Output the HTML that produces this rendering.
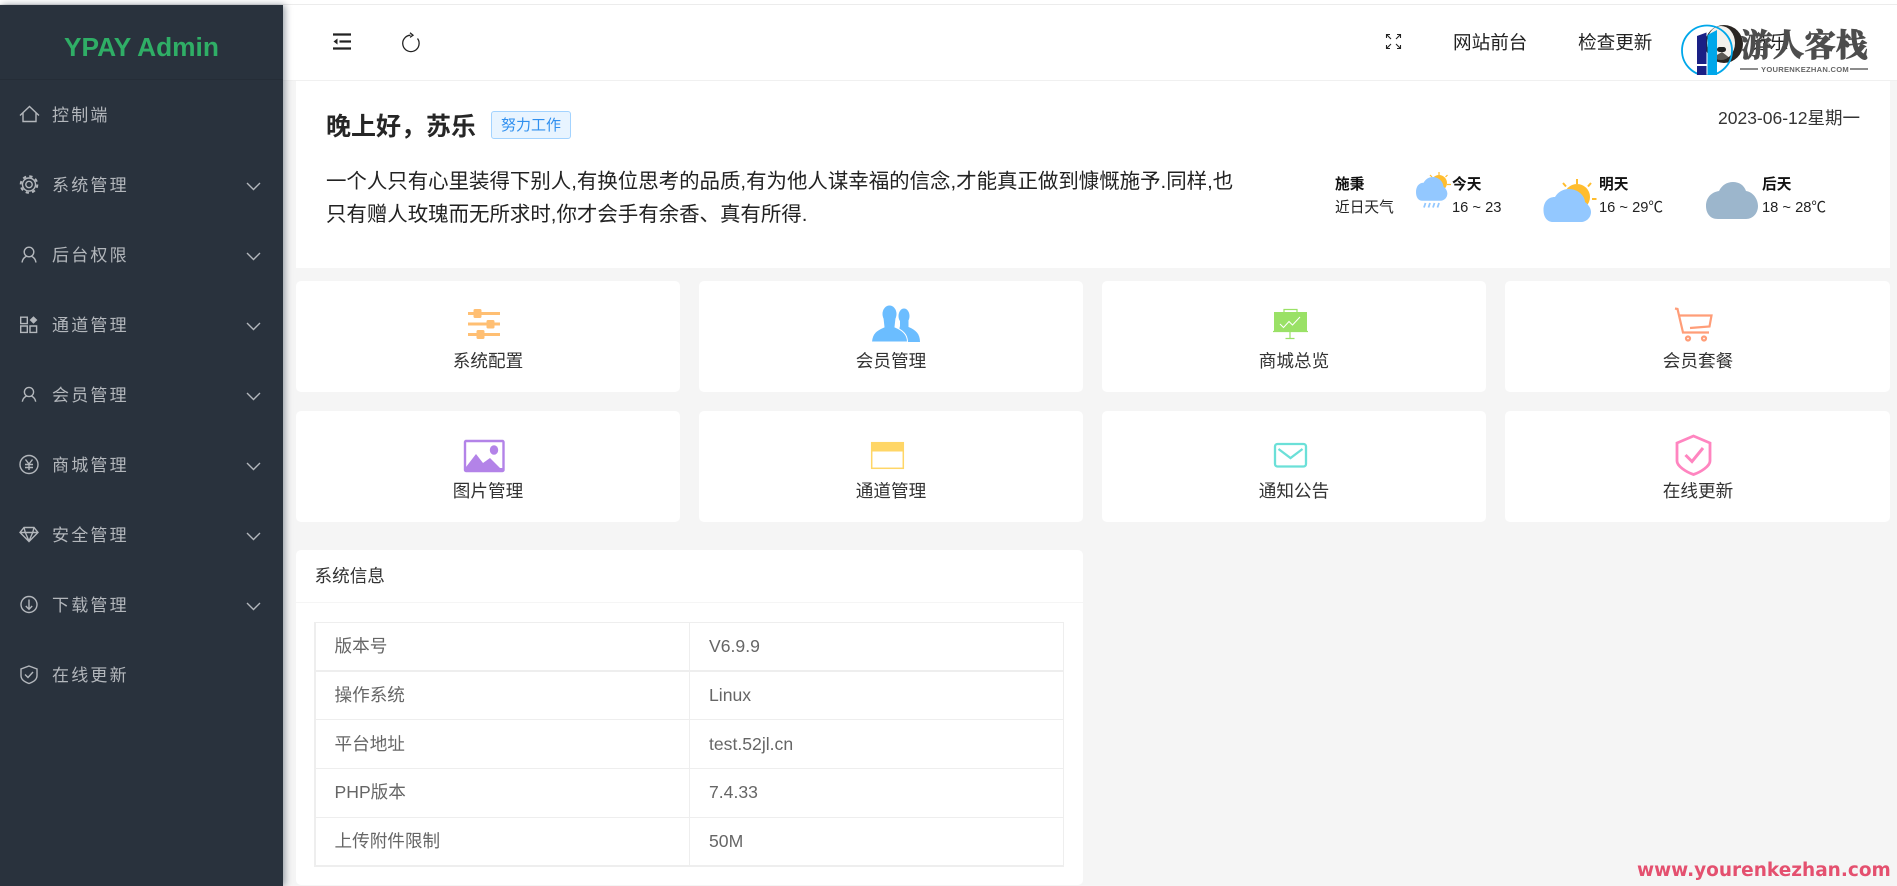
<!DOCTYPE html>
<html lang="zh-CN">
<head>
<meta charset="utf-8">
<title>YPAY Admin</title>
<style>
html,body{margin:0;padding:0;width:1897px;height:886px;overflow:hidden;background:#f5f5f5;font-family:"Liberation Sans","Noto Sans CJK SC",sans-serif;color:#333}
.abs{position:absolute}
.t{position:absolute;white-space:nowrap;line-height:24px}
.card{position:absolute;background:#fff;border-radius:5px}
#top{left:0;top:0;width:1897px;height:4px;background:#fff;border-bottom:1px solid #ececec}
#side{left:0;top:5px;width:283px;height:881px;background:#29323d;box-shadow:2px 0 7px rgba(0,21,41,.4);z-index:3}
#logoline{left:0;top:79px;width:283px;height:1px;background:#252d37;z-index:4}
#head{left:283px;top:5px;width:1614px;height:75px;background:#fff;border-bottom:1px solid #f0f0f0;z-index:2}
.m{font-size:17px;letter-spacing:2.2px;color:#b3b7bc;left:52px;z-index:5}
.h{font-size:18.6px;color:#222;z-index:5}
.lbl{font-size:17.6px;color:#333;text-align:center;width:384px;z-index:5}
.w{font-size:14.7px;color:#222;z-index:5}
.wb{font-weight:bold;color:#111}
.c{font-size:17.6px;color:#666;z-index:5}
.ln{position:absolute;background:#eee;z-index:5}
</style>
</head>
<body>
<div class="abs" id="top"></div>
<div class="abs" id="side"></div>
<div class="abs" id="logoline"></div>
<div class="abs" id="head"></div>

<div class="t" style="left:64px;top:35px;font-size:26.3px;font-weight:bold;color:#2fae66;z-index:5">YPAY Admin</div>
<div class="t m" style="top:104px">控制端</div>
<div class="t m" style="top:174px">系统管理</div>
<div class="t m" style="top:244px">后台权限</div>
<div class="t m" style="top:314px">通道管理</div>
<div class="t m" style="top:384px">会员管理</div>
<div class="t m" style="top:454px">商城管理</div>
<div class="t m" style="top:524px">安全管理</div>
<div class="t m" style="top:594px">下载管理</div>
<div class="t m" style="top:664px">在线更新</div>

<div class="t h" style="left:1453px;top:31px">网站前台</div>
<div class="t h" style="left:1578px;top:31px">检查更新</div>
<div class="t h" style="left:1751px;top:31px">苏乐</div>

<!-- greeting card -->
<div class="abs" style="left:296px;top:81px;width:1594px;height:187px;background:#fff"></div>
<div class="t" style="left:326px;top:114.500px;font-size:25px;font-weight:bold;color:#262626;z-index:5">晚上好，苏乐</div>
<div class="abs" style="left:491px;top:111px;width:78px;height:26px;background:#e8f4ff;border:1px solid #a3d3ff;border-radius:3px;color:#2f8fef;font-size:15px;line-height:27px;text-align:center;z-index:5">努力工作</div>
<div class="t" style="left:1718px;top:106px;font-size:17.5px;color:#333;z-index:5">2023-06-12星期一</div>
<div class="t" style="left:326px;top:170px;font-size:20.45px;color:#222;z-index:5">一个人只有心里装得下别人,有换位思考的品质,有为他人谋幸福的信念,才能真正做到慷慨施予.同样,也</div>
<div class="t" style="left:326px;top:202.500px;font-size:20.45px;color:#222;z-index:5">只有赠人玫瑰而无所求时,你才会手有余香、真有所得.</div>

<div class="t w wb" style="left:1335px;top:173px">施秉</div>
<div class="t w" style="left:1335px;top:196px">近日天气</div>
<div class="t w wb" style="left:1452px;top:173px">今天</div>
<div class="t w" style="left:1452px;top:196px">16 ~ 23</div>
<div class="t w wb" style="left:1599px;top:173px">明天</div>
<div class="t w" style="left:1599px;top:196px">16 ~ 29℃</div>
<div class="t w wb" style="left:1762px;top:173px">后天</div>
<div class="t w" style="left:1762px;top:196px">18 ~ 28℃</div>

<!-- grid -->
<div class="card" style="left:296px;top:281px;width:384px;height:111px"></div>
<div class="card" style="left:699px;top:281px;width:384px;height:111px"></div>
<div class="card" style="left:1102px;top:281px;width:384px;height:111px"></div>
<div class="card" style="left:1505px;top:281px;width:385px;height:111px"></div>
<div class="card" style="left:296px;top:411px;width:384px;height:111px"></div>
<div class="card" style="left:699px;top:411px;width:384px;height:111px"></div>
<div class="card" style="left:1102px;top:411px;width:384px;height:111px"></div>
<div class="card" style="left:1505px;top:411px;width:385px;height:111px"></div>
<div class="t lbl" style="left:296px;top:349px">系统配置</div>
<div class="t lbl" style="left:699px;top:349px">会员管理</div>
<div class="t lbl" style="left:1102px;top:349px">商城总览</div>
<div class="t lbl" style="left:1506px;top:349px">会员套餐</div>
<div class="t lbl" style="left:296px;top:479px">图片管理</div>
<div class="t lbl" style="left:699px;top:479px">通道管理</div>
<div class="t lbl" style="left:1102px;top:479px">通知公告</div>
<div class="t lbl" style="left:1506px;top:479px">在线更新</div>

<!-- system info -->
<div class="card" style="left:296px;top:550px;width:787px;height:335px"></div>
<div class="abs" style="left:296px;top:602px;width:787px;height:1px;background:#f5f5f5;z-index:4"></div>
<div class="t" style="left:314.5px;top:564px;font-size:17.6px;color:#333;z-index:5">系统信息</div>
<div class="ln" style="left:314px;top:622px;width:750px;height:1px"></div>
<div class="ln" style="left:314px;top:670px;width:750px;height:2px"></div>
<div class="ln" style="left:314px;top:719px;width:750px;height:1px"></div>
<div class="ln" style="left:314px;top:768px;width:750px;height:1px"></div>
<div class="ln" style="left:314px;top:817px;width:750px;height:1px"></div>
<div class="ln" style="left:314px;top:865px;width:750px;height:2px"></div>
<div class="ln" style="left:314px;top:622px;width:2px;height:245px"></div>
<div class="ln" style="left:1063px;top:622px;width:1px;height:245px"></div>
<div class="ln" style="left:689px;top:622px;width:1px;height:245px"></div>
<div class="t c" style="left:334.5px;top:634px">版本号</div><div class="t c" style="left:709px;top:634px">V6.9.9</div>
<div class="t c" style="left:334.5px;top:683px">操作系统</div><div class="t c" style="left:709px;top:683px">Linux</div>
<div class="t c" style="left:334.5px;top:732px">平台地址</div><div class="t c" style="left:709px;top:732px">test.52jl.cn</div>
<div class="t c" style="left:334.5px;top:780px">PHP版本</div><div class="t c" style="left:709px;top:780px">7.4.33</div>
<div class="t c" style="left:334.5px;top:829px">上传附件限制</div><div class="t c" style="left:709px;top:829px">50M</div>

<!-- all icons in page coordinates -->
<svg class="abs" style="left:0;top:0;z-index:6" width="1897" height="886" viewBox="0 0 1897 886">
 <g fill="none" stroke="#b3b7bc" stroke-width="1.4">
  <path d="M20 115.5 L29.5 106.5 L39 115.5 M23 113 V121.5 H36 V113"/>
  <circle cx="29" cy="184.500" r="6.500" stroke-width="1.400"/>
  <circle cx="29" cy="184.500" r="8.300" stroke-width="2" stroke-dasharray="3.300 3.220"/>
  <circle cx="29" cy="184.500" r="3.200"/>
  <circle cx="29" cy="252" r="4.800"/><path d="M22 262.5 C22.500 259 24 257.500 26.500 256.300 M31.500 256.300 C34 257.500 35.500 259 36 262.5"/>
  <path d="M20.700 317.200 H27.300 V323.600 H20.700Z M20.700 326 H27.300 V332.400 H20.700Z M30 326 H36.600 V332.400 H30Z"/>
  <circle cx="29" cy="392" r="4.600"/><path d="M22.300 401.700 C22.800 398.500 24.200 397.200 26.500 396 M31.500 396 C33.800 397.200 35.200 398.500 35.700 401.700"/>
  <circle cx="29" cy="464.500" r="9"/><path d="M25.500 459.500 L29 464 L32.500 459.500 M25 464.500 H33 M25 467.500 H33 M29 464 V470"/>
  <path d="M24 527.500 H34 L38 532.500 L29 541.500 L20 532.500Z M20 532.500 H38 M25.300 532.500 L29 541 L32.700 532.500 M24 527.500 L25.300 532.500 M34 527.500 L32.700 532.500"/>
  <circle cx="29" cy="604.500" r="8"/><path d="M29 599.500 V609 M25.800 606 L29 609.300 L32.200 606"/>
  <path d="M29 666 L37 669 V675.500 C37 679.500 33.500 682 29 683.500 C24.500 682 21 679.500 21 675.500 V669Z M25 674.500 L28 677.500 L33 672"/>
  <path d="M247 183 L253.500 189.500 L260 183 M247 253 L253.500 259.500 L260 253 M247 323 L253.500 329.500 L260 323 M247 393 L253.500 399.500 L260 393 M247 463 L253.500 469.500 L260 463 M247 533 L253.500 539.500 L260 533 M247 603 L253.500 609.500 L260 603"/>
 </g>
 <path d="M33.500 316.200 L37.400 320 L33.500 323.800 L29.600 320Z" fill="#b3b7bc"/>

 <!-- header icons -->
 <g fill="none" stroke="#222">
  <path d="M333 34.500 H351 M333 48.500 H351" stroke-width="2.200"/>
  <path d="M339.500 41.500 H351" stroke-width="2.200"/>
  <path d="M333.500 41.500 L337.500 38.500 V44.500Z" fill="#222" stroke="none"/>
  <path d="M410.500 35.200 A8.200 8.200 0 1 0 417.500 38.500" stroke-width="1.300"/>
  <path d="M410 32.800 L413 35.200 L410 37.400" stroke-width="1.300"/>
  <path d="M1386.500 34.500 L1391 39 M1400.500 34.500 L1396 39 M1386.500 48.500 L1391 44 M1400.500 48.500 L1396 44 M1386.500 38 V34.500 H1390 M1397 34.500 H1400.500 V38 M1386.500 45 V48.500 H1390 M1397 48.500 H1400.500 V45" stroke-width="1.100"/>
 </g>

 <!-- weather -->
 <circle cx="1439" cy="183" r="8" fill="#ffbd2e"/>
 <path d="M1439 172 V175 M1430 175 L1432 177 M1447.500 175 L1445.500 177 M1447 184.500 H1451" stroke="#ffbd2e" stroke-width="1.200" fill="none"/>
 <path d="M1553 222 C1547 222 1543.500 217 1543.500 210 C1543.500 202 1548 197 1555 197 C1558 192 1563 189 1569 189 C1578 189 1585 196 1585 202 C1589 205 1591 209 1591 212 C1591 218 1586 222 1581 222 Z" fill="#93c8ff" transform="translate(1416 177) scale(.66 .72) translate(-1543.500 -189)"/>
 <path d="M1424 207.500 L1425.500 203 M1428.500 207.500 L1430 203 M1433 207.500 L1434.500 203 M1437.500 207.500 L1439 203" stroke="#93c8ff" stroke-width="1.800" fill="none"/>
 <circle cx="1577" cy="197" r="13" fill="#ffbd2e"/>
 <path d="M1577 179 V184 M1563 183 L1566 186.500 M1591 183 L1588 186.500 M1592 199 H1596.500" stroke="#ffbd2e" stroke-width="2" fill="none"/>
 <path d="M1553 222 C1547 222 1543.500 217 1543.500 210 C1543.500 202 1548 197 1555 197 C1558 192 1563 189 1569 189 C1578 189 1585 196 1585 202 C1589 205 1591 209 1591 212 C1591 218 1586 222 1581 222 Z" fill="#93c8ff"/>
 <path d="M1718 219 C1709 219 1706 212 1706 206 C1706 197 1712 192 1719 191 C1722 185 1727 182 1733 182 C1739 182 1744 185 1746 191 C1753 192 1758 199 1758 206 C1758 213 1753 219 1746 219 Z" fill="#9cb6cc"/>

 <!-- sliders -->
 <g fill="#ffbf73">
  <rect x="468" y="312" width="32" height="3"/><rect x="473.500" y="309" width="8" height="9" rx="1.500"/>
  <rect x="468" y="322.500" width="32" height="3"/><rect x="486.500" y="320" width="8" height="8.500" rx="1.500"/>
  <rect x="468" y="333" width="32" height="3"/><rect x="476.500" y="330" width="8" height="9" rx="1.500"/>
 </g>
 <!-- people -->
 <g fill="#6bbdff">
  <ellipse cx="904" cy="316" rx="5.500" ry="7.500"/>
  <path d="M900 320 L900 326 L896 342 H920 C920 334 916 330 908.500 327 V320Z"/>
 </g>
 <path d="M871.500 342 C872 333 877 330 884 327 L883 318 H896 L895 327 C902 330 907.500 334 907.500 342Z" fill="#6bbdff" stroke="#fff" stroke-width="1"/>
 <ellipse cx="889.500" cy="314" rx="7" ry="8.500" fill="#6bbdff"/>
 <!-- board -->
 <path d="M1284 315.500 V309.500 H1297 V315.500" fill="none" stroke="#9ae166" stroke-width="1.200"/>
 <rect x="1274" y="312" width="33" height="20" fill="#9ae166"/>
 <path d="M1273 331.500 H1308 M1290 332 V338 M1285.500 338.500 H1294.500" stroke="#9ae166" stroke-width="1.200" fill="none"/>
 <path d="M1280 324 L1283.500 327.500 L1289 321.500 L1292.500 325 L1300 317" stroke="#fff" stroke-width="1" fill="none"/>
 <!-- cart -->
 <g fill="none" stroke="#ff9d78" stroke-width="2.200">
  <path d="M1675 308.500 L1677.500 309 L1683 332.500 H1709"/>
  <path d="M1679 315.500 H1711.500 L1709.500 326.500 L1690 328"/>
  <circle cx="1688" cy="338.500" r="2"/><circle cx="1704" cy="338.500" r="2"/>
 </g>
 <!-- image -->
 <rect x="465" y="441" width="38.500" height="30" rx="1" fill="none" stroke="#b383e8" stroke-width="2.400"/>
 <ellipse cx="494" cy="450" rx="4.200" ry="4.800" fill="#b383e8"/>
 <path d="M466 472 V467 L476 454 L483 463 L490 458 L500 468 L503 468 V472Z" fill="#b383e8"/>
 <!-- window -->
 <rect x="871.700" y="442.700" width="31.600" height="25.600" fill="#fff" stroke="#ffd666" stroke-width="1.500"/>
 <rect x="871" y="442" width="33" height="9.500" fill="#ffd666"/>
 <!-- envelope -->
 <rect x="1275" y="444" width="31" height="22.500" rx="2.500" fill="none" stroke="#6be0d8" stroke-width="2.300"/>
 <path d="M1278.500 449 L1290.500 458 L1302.500 449" fill="none" stroke="#6be0d8" stroke-width="2.300"/>
 <!-- shield -->
 <path d="M1693.500 436 L1710 443 V461 C1710 466 1701 472 1693.500 474.500 C1686 472 1677 466 1677 461 V443Z" fill="none" stroke="#ff85c0" stroke-width="2.800"/>
 <path d="M1685.500 455 L1692 461.500 L1703 448" fill="none" stroke="#ff85c0" stroke-width="3"/>
</svg>

<!-- avatar + overlay logo watermark -->
<svg class="abs" style="left:1670px;top:15px;z-index:8" width="227" height="70" viewBox="1670 15 227 70">
 <defs><clipPath id="clipdog"><circle cx="1724" cy="44" r="19"/></clipPath><clipPath id="clipbot"><rect x="1670" y="15" width="227" height="60"/></clipPath></defs>
 <circle cx="1724" cy="44" r="19" fill="#2a2522"/>
 <g clip-path="url(#clipdog)">
  <ellipse cx="1721" cy="43" rx="14" ry="17" fill="#f4f1ec"/>
  <rect x="1717" y="47" width="9" height="5" rx="2.500" fill="#222"/>
  <path d="M1705 62 L1722 52 L1735 62Z" fill="#2a2522" opacity=".75"/>
 </g>
 <g clip-path="url(#clipbot)">
  <circle cx="1707" cy="50.500" r="25" fill="none" stroke="#00a7ea" stroke-width="1.800"/>
  <path d="M1697 36 L1706.500 32.500 V64 H1697Z M1697 66 H1706.500 V75 H1697Z" fill="#1a2085"/>
  <path d="M1707.500 35 L1717 30 V75 H1707.500Z" fill="#00a7ea"/>
 </g>
 <text x="1741" y="56" font-family="'Noto Serif CJK SC',serif" font-weight="900" font-size="31.500" fill="#4d4d4d" stroke="#4d4d4d" stroke-width=".7" letter-spacing=".2">游人客栈</text>
 <path d="M1740 69 H1758 M1850 69 H1868" stroke="#666" stroke-width="1.500"/>
 <text x="1761" y="72" font-family="'Liberation Sans',sans-serif" font-weight="bold" font-size="7.600" fill="#666" letter-spacing=".25">YOURENKEZHAN.COM</text>
</svg>

<div class="t" style="left:1637px;top:859px;font-family:'DejaVu Sans',sans-serif;font-weight:bold;font-size:18.500px;letter-spacing:0;color:#e4506f;z-index:9">www.yourenkezhan.com</div>
</body>
</html>
